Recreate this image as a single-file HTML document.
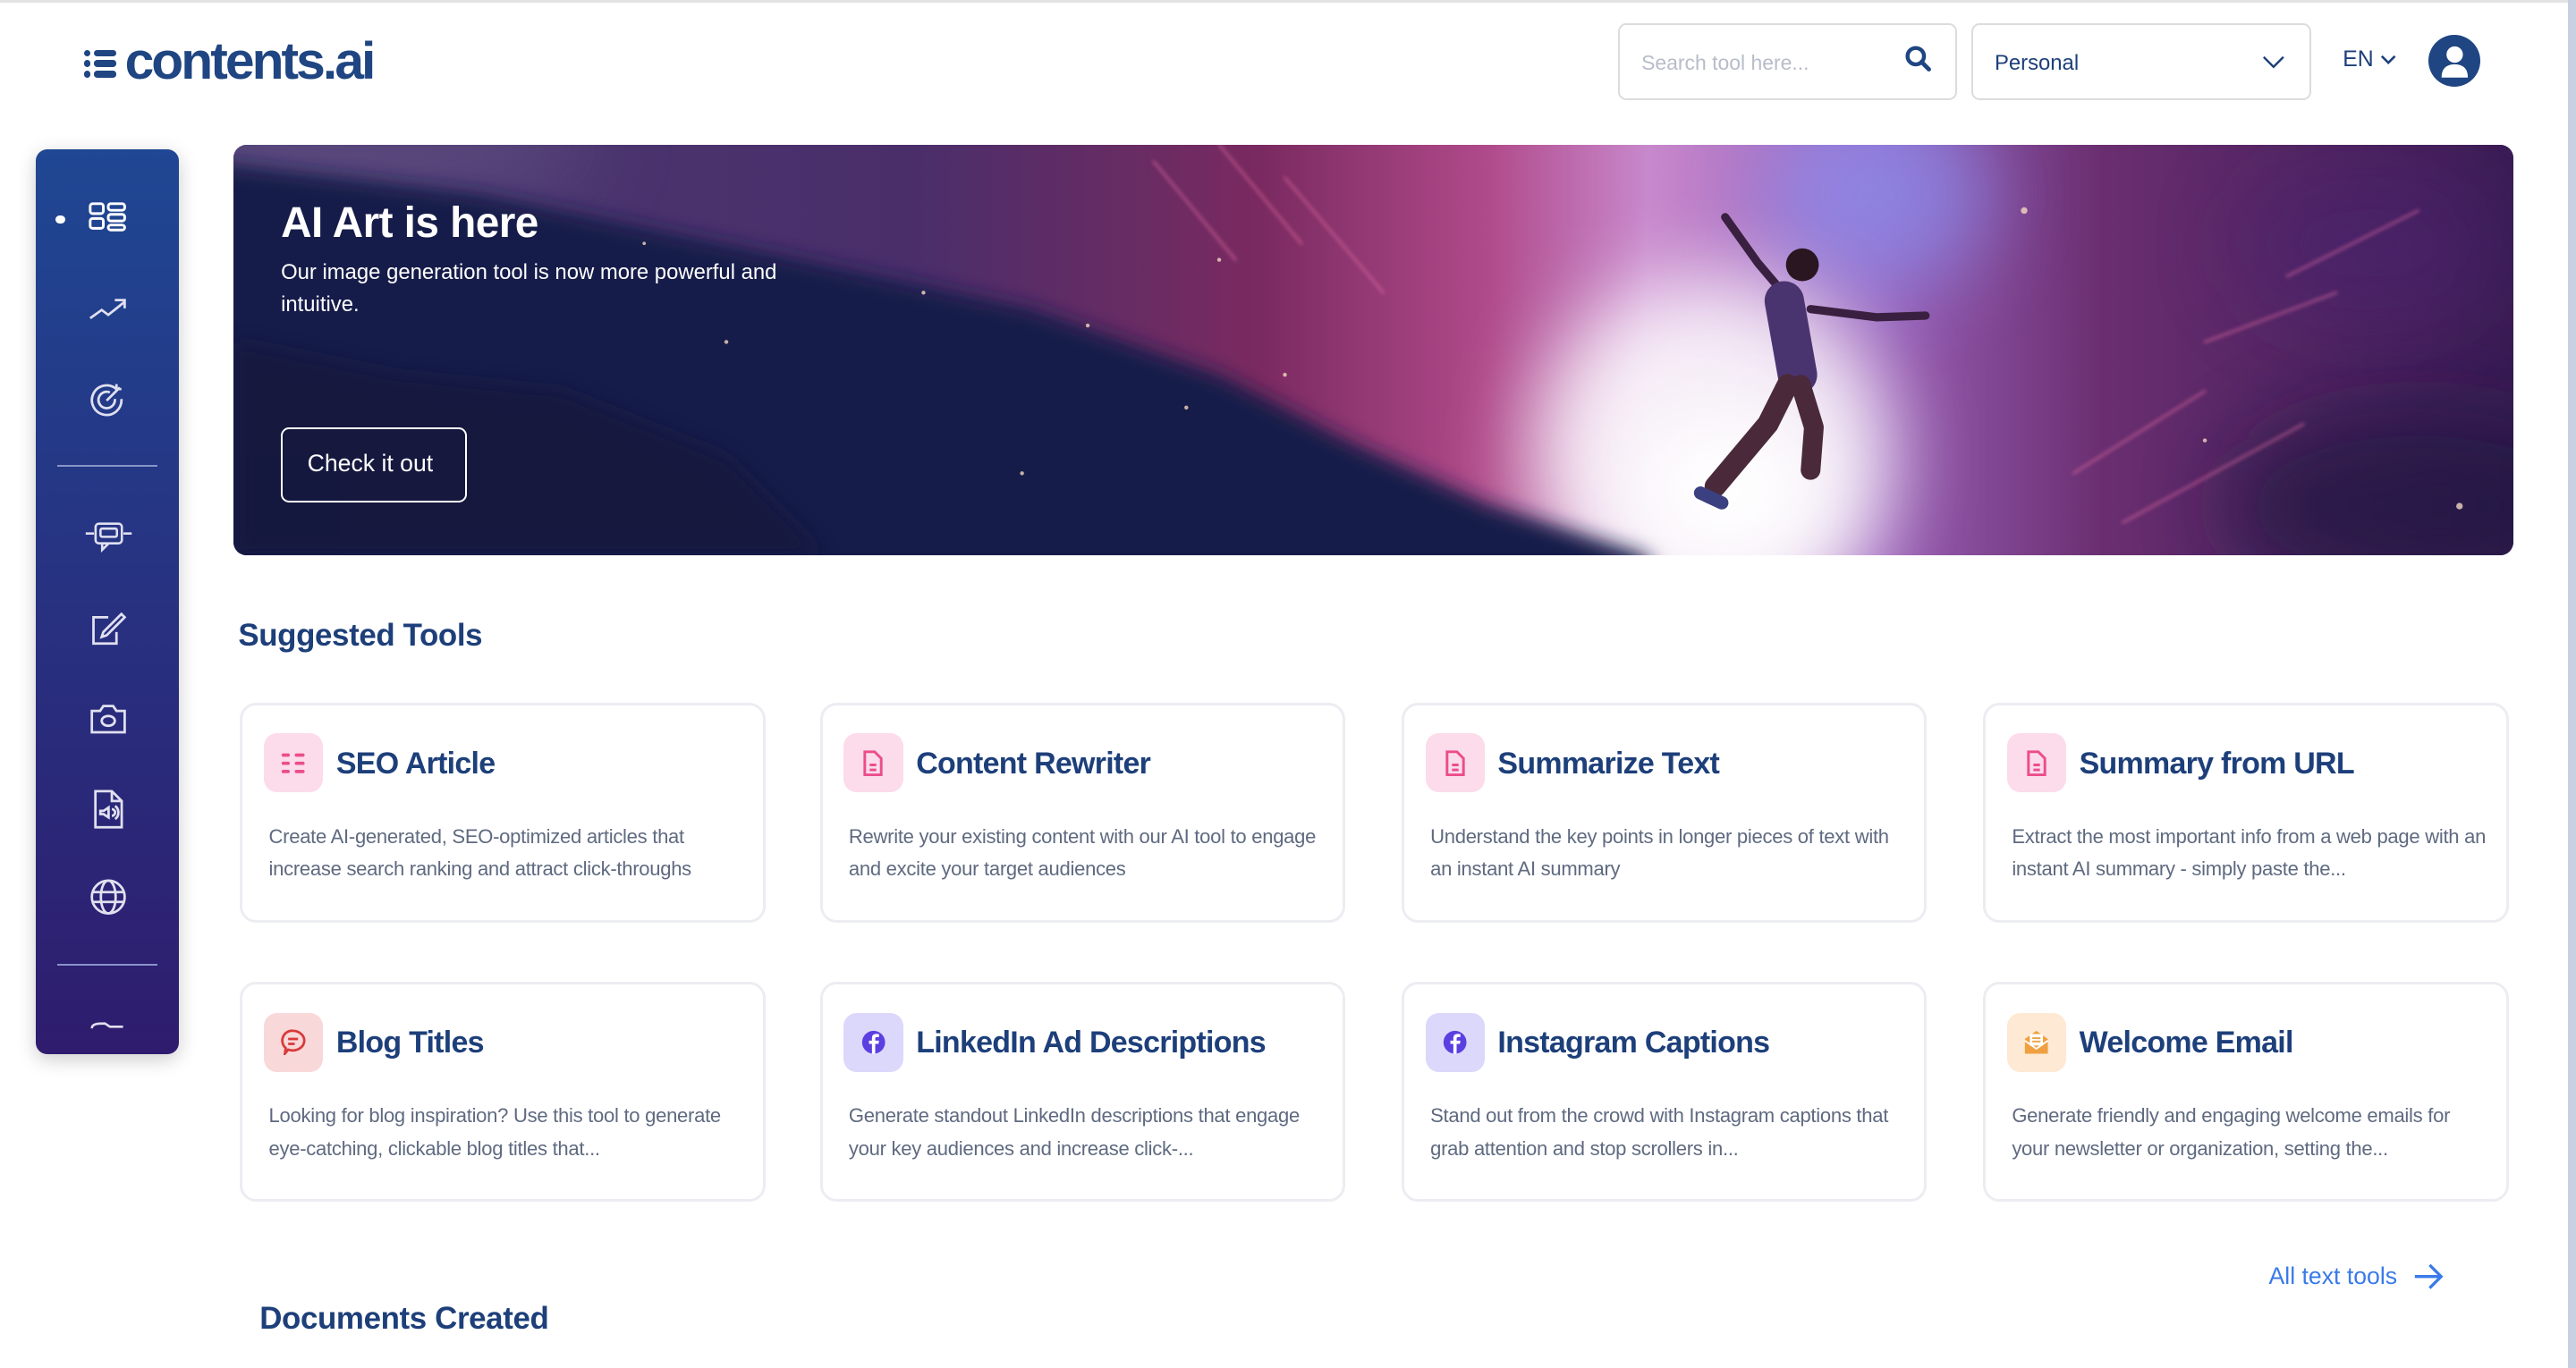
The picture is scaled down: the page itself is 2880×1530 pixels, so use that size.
<!DOCTYPE html>
<html><head><meta charset="utf-8">
<style>
*{box-sizing:border-box;margin:0;padding:0}
html,body{width:2880px;height:1530px;overflow:hidden;background:#fff}
#root{zoom:1.83674;width:1568px;height:833px;position:relative;font-family:"Liberation Sans",sans-serif;color:#1d3f7a}
.topline{position:absolute;left:0;top:0;width:1568px;height:1.5px;background:#e2e2e2}
.scroll{position:absolute;left:1563px;top:0;width:5px;height:833px;background:#c8d0e2}
.logo{position:absolute;left:51px;top:19px;font-weight:700;font-size:32px;letter-spacing:-1.6px;color:#1f4582;display:flex;align-items:center}
.logo .ic{display:flex;flex-direction:column;gap:2.5px;margin-right:5px;margin-top:3px}
.logo .ic i{display:flex;gap:2px}
.logo .ic i:before{content:"";width:4px;height:4px;border-radius:2px;background:#1f4582}
.logo .ic i:after{content:"";width:14px;height:4px;border-radius:2px;background:#1f4582}
.search{position:absolute;left:985px;top:14px;width:206px;height:47px;border:1.5px solid #dcdcdc;border-radius:5px;font-size:12.5px;color:#b8bcc8;padding:16px 0 0 13px}
.sel{position:absolute;left:1200px;top:14px;width:207px;height:47px;border:1.5px solid #dcdcdc;border-radius:5px;font-size:13px;color:#1d3f7a;padding:16px 0 0 13px}
.en{position:absolute;left:1426px;top:29px;font-size:13.5px;color:#1d3f7a}
.avatar{position:absolute;left:1478px;top:21px;width:32px;height:32px;border-radius:16px;background:#1f4582;overflow:hidden}
.side{position:absolute;left:22px;top:91px;width:87px;height:551px;border-radius:7px;background:linear-gradient(#1f4793,#2f1c6e);box-shadow:0 3px 12px rgba(0,0,0,.2);overflow:hidden}
.side svg{position:absolute}
.banner{position:absolute;left:142px;top:88px;width:1388px;height:250px;border-radius:8px;overflow:hidden;background:#3a2a60}
.banner h1{position:absolute;left:29px;top:33px;color:#fff;font-size:26px;font-weight:700;letter-spacing:-.3px}
.banner p{position:absolute;left:29px;top:68px;width:340px;color:#fff;font-size:13px;line-height:20px}
.btn{position:absolute;left:29px;top:172px;width:113px;height:46px;border:1.5px solid #fff;border-radius:5px;color:#fff;font-size:14.5px;padding:13px 0 0 15px}
h2{position:absolute;font-size:19px;font-weight:700;color:#1d3f7a;letter-spacing:-.2px}
.card{position:absolute;width:320px;height:134px;border:2px solid #ecedf2;border-radius:10px;background:#fff}
.card .i{position:absolute;left:13px;top:17px;width:36px;height:36px;border-radius:8px;display:flex;align-items:center;justify-content:center}
.card .t{position:absolute;left:57px;top:25px;font-size:18.5px;font-weight:700;color:#1d3f7a;letter-spacing:-.4px;white-space:nowrap}
.card .d{position:absolute;left:16px;top:70px;width:290px;font-size:12px;line-height:20px;color:#5f6a80;letter-spacing:-.15px}
.link{position:absolute;left:1381px;top:769px;font-size:14.5px;color:#3a7ae8}
</style></head><body><div id="root">
<div class="topline"></div><div class="scroll"></div>
<div class="logo"><div class="ic"><i></i><i></i><i></i></div>contents.ai</div>
<div class="search">Search tool here...
<svg style="position:absolute;left:173px;top:12px" width="18" height="18" viewBox="0 0 18 18"><circle cx="7" cy="7" r="5" fill="none" stroke="#1f4582" stroke-width="2.4"/><path d="M10.5 10.5 15 15" stroke="#1f4582" stroke-width="2.6" stroke-linecap="round"/></svg></div>
<div class="sel">Personal<svg style="position:absolute;left:176px;top:18px" width="14" height="9" viewBox="0 0 14 9"><path d="M1 1.5 7 7.5 13 1.5" fill="none" stroke="#1d3f7a" stroke-width="1.3"/></svg></div>
<div class="en">EN <svg width="10" height="7" viewBox="0 0 10 7"><path d="M1 1 5 5 9 1" fill="none" stroke="#1d3f7a" stroke-width="1.4"/></svg></div>
<div class="avatar"><svg width="32" height="32" viewBox="0 0 32 32"><circle cx="16" cy="12" r="5" fill="#fff"/><path d="M8 26c0-6 3.5-8 8-8s8 2 8 8z" fill="#fff"/></svg></div>

<div class="side">
<div style="position:absolute;left:12px;top:40px;width:6px;height:5px;border-radius:3px;background:#fff"></div>
<svg style="left:32px;top:32px" width="24" height="22" viewBox="0 0 24 22" fill="none" stroke="#fff" stroke-width="1.6"><rect x="1" y="1" width="8" height="6" rx="1.5"/><rect x="1" y="10" width="8" height="6" rx="1.5"/><rect x="12" y="1" width="10" height="4" rx="1.5"/><rect x="12" y="7.5" width="10" height="4" rx="1.5"/><rect x="12" y="14" width="10" height="3" rx="1.5"/></svg>
<svg style="left:32px;top:90px" width="24" height="16" viewBox="0 0 24 16" fill="none" stroke="#e0e0f0" stroke-width="1.5"><path d="M1 13 8 8 12 11 22 3M16 2h6v5"/></svg>
<svg style="left:32px;top:141px" width="24" height="22" viewBox="0 0 24 22" fill="none" stroke="#e0e0f0" stroke-width="1.5"><path d="M17 5A9 9 0 1 0 20 11"/><path d="M13 7A5 5 0 1 0 16 11"/><path d="M11 12 19 4M17 2v3h3"/></svg>
<div style="position:absolute;left:13px;top:192px;width:61px;height:1px;background:#8a94c8"></div>
<svg style="left:29px;top:226px" width="30" height="22" viewBox="0 0 30 22" fill="none" stroke="#e0e0f0" stroke-width="1.4"><rect x="7" y="2" width="16" height="12" rx="2"/><rect x="10" y="5" width="10" height="5" rx="1"/><path d="M11 14 11 18 15 14M1 8h5M24 8h5"/></svg>
<svg style="left:32px;top:281px" width="24" height="22" viewBox="0 0 24 22" fill="none" stroke="#e0e0f0" stroke-width="1.5"><path d="M12 4H3v16h14v-7"/><path d="M9 13 20 2l2 2-11 11-3 1z"/></svg>
<svg style="left:32px;top:337px" width="24" height="20" viewBox="0 0 24 20" fill="none" stroke="#e0e0f0" stroke-width="1.5"><path d="M2 5h5l2-3h6l2 3h5v13H2z"/><ellipse cx="12" cy="11" rx="4" ry="3"/></svg>
<svg style="left:34px;top:390px" width="20" height="24" viewBox="0 0 20 24" fill="none" stroke="#e0e0f0" stroke-width="1.5"><path d="M2 1h10l6 6v16H2zM12 1v6h6"/><path d="M5 13h2l3-2v6l-3-2H5zM12 12a2 2 0 0 1 0 4M14 10a5 5 0 0 1 0 8"/></svg>
<svg style="left:32px;top:444px" width="24" height="22" viewBox="0 0 24 22" fill="none" stroke="#e0e0f0" stroke-width="1.5"><ellipse cx="12" cy="11" rx="10" ry="10"/><ellipse cx="12" cy="11" rx="4.5" ry="10"/><path d="M2 8h20M2 14h20"/></svg>
<div style="position:absolute;left:13px;top:496px;width:61px;height:1px;background:#8a94c8"></div>
<svg style="left:32px;top:530px" width="24" height="6" viewBox="0 0 24 6" fill="none" stroke="#e0e0f0" stroke-width="1.4"><path d="M2 5c0-3 4-3 8-3l3 2h8"/></svg>
</div>

<div class="banner">
<svg style="position:absolute;left:0;top:0" width="1388" height="250" viewBox="0 0 1388 250" stroke-linecap="round" stroke-linejoin="round">
<defs>
<linearGradient id="bg" x1="0" y1="0" x2="1" y2="0">
<stop offset="0" stop-color="#4a3a72"/><stop offset=".3" stop-color="#4a2e6a"/><stop offset=".45" stop-color="#7a2a60"/><stop offset=".55" stop-color="#b04a8a"/><stop offset=".62" stop-color="#c888cc"/><stop offset=".72" stop-color="#9a60b8"/><stop offset=".82" stop-color="#6a2e70"/><stop offset="1" stop-color="#3a1c54"/>
</linearGradient>
<filter id="b1" x="-50%" y="-50%" width="200%" height="200%"><feGaussianBlur stdDeviation="25"/></filter>
<filter id="b2" x="-20%" y="-20%" width="140%" height="140%"><feGaussianBlur stdDeviation="6"/></filter>
<filter id="b3"><feGaussianBlur stdDeviation="1.2"/></filter>
</defs>
<rect width="1388" height="250" fill="url(#bg)"/>
<ellipse cx="1000" cy="30" rx="70" ry="60" fill="#8a90f0" opacity=".7" filter="url(#b1)"/>
<ellipse cx="900" cy="190" rx="110" ry="110" fill="#fff" opacity=".85" filter="url(#b1)"/>
<ellipse cx="910" cy="210" rx="60" ry="50" fill="#fff" filter="url(#b1)"/>
<ellipse cx="1330" cy="220" rx="120" ry="60" fill="#1e1440" opacity=".7" filter="url(#b1)"/>
<ellipse cx="1300" cy="60" rx="80" ry="50" fill="#4a2470" opacity=".5" filter="url(#b1)"/>
<ellipse cx="60" cy="0" rx="160" ry="40" fill="#6a5a8a" opacity=".5" filter="url(#b1)"/>
<polygon points="-20,10 150,30 340,69 486,100 600,140 680,181 762,218 860,250 870,270 -20,270" fill="#181a48" filter="url(#b2)"/>
<polygon points="0,120 100,140 200,150 300,190 360,250 0,250" fill="#121338" opacity=".6" filter="url(#b2)"/>
<g stroke="#e06aa0" stroke-width="1.5" fill="none" opacity=".6" filter="url(#b3)">
<path d="M560 10 L610 70"/><path d="M600 0 L650 60"/><path d="M640 20 L700 90"/><path d="M1120 200 L1200 150"/><path d="M1150 230 L1260 170"/><path d="M1250 80 L1330 40"/><path d="M1200 120 L1280 90"/>
</g>
<g fill="#f4d8c0" opacity=".8"><circle cx="300" cy="120" r="1.2"/><circle cx="420" cy="90" r="1.2"/><circle cx="520" cy="110" r="1.2"/><circle cx="580" cy="160" r="1.2"/><circle cx="640" cy="140" r="1.2"/><circle cx="1090" cy="40" r="2"/><circle cx="1200" cy="180" r="1.2"/><circle cx="1355" cy="220" r="2"/><circle cx="600" cy="70" r="1.2"/><circle cx="250" cy="60" r="1"/><circle cx="480" cy="200" r="1.2"/></g>
<g fill="none" stroke="#3a2040">
<path d="M908 44 L928 72 L945 92" stroke-width="5"/>
<path d="M960 100 L1000 105 L1030 104" stroke-width="5"/>
<path d="M944 95 L952 140" stroke="#4a3470" stroke-width="24"/>
<path d="M946 146 L934 170 L902 208" stroke="#4a2a3a" stroke-width="13"/>
<path d="M954 146 L962 172 L960 198" stroke="#4a2a3a" stroke-width="12"/>
</g>
<circle cx="955" cy="73" r="10" fill="#2a1620"/>
<path d="M893 212 L906 218" stroke="#3a4080" stroke-width="8"/>
</svg>
<h1>AI Art is here</h1>
<p>Our image generation tool is now more powerful and intuitive.</p>
<div class="btn">Check it out</div>
</div>

<h2 style="left:145px;top:376px">Suggested Tools</h2>

<div class="card" style="left:146px;top:428px"><div class="i" style="background:#fcdcea"><svg width="16" height="16" viewBox="0 0 16 16" fill="#ec4d8c"><rect x="1" y="2" width="5" height="2" rx="1"/><rect x="9" y="2" width="6" height="2" rx="1"/><rect x="1" y="7" width="5" height="2" rx="1"/><rect x="9" y="7" width="6" height="2" rx="1"/><rect x="1" y="12" width="5" height="2" rx="1"/><rect x="9" y="12" width="6" height="2" rx="1"/></svg></div><div class="t">SEO Article</div><div class="d">Create AI-generated, SEO-optimized articles that increase search ranking and attract click-throughs</div></div>
<div class="card" style="left:499px;top:428px"><div class="i" style="background:#fcdcea"><svg width="12" height="16" viewBox="0 0 12 16" fill="none" stroke="#ec4d8c" stroke-width="1.6"><path d="M1 1h6l4 4v10H1zM4 9h4M4 12h4"/></svg></div><div class="t">Content Rewriter</div><div class="d">Rewrite your existing content with our AI tool to engage and excite your target audiences</div></div>
<div class="card" style="left:853px;top:428px"><div class="i" style="background:#fcdcea"><svg width="12" height="16" viewBox="0 0 12 16" fill="none" stroke="#ec4d8c" stroke-width="1.6"><path d="M1 1h6l4 4v10H1zM4 9h4M4 12h4"/></svg></div><div class="t">Summarize Text</div><div class="d">Understand the key points in longer pieces of text with an instant AI summary</div></div>
<div class="card" style="left:1207px;top:428px"><div class="i" style="background:#fcdcea"><svg width="12" height="16" viewBox="0 0 12 16" fill="none" stroke="#ec4d8c" stroke-width="1.6"><path d="M1 1h6l4 4v10H1zM4 9h4M4 12h4"/></svg></div><div class="t">Summary from URL</div><div class="d">Extract the most important info from a web page with an instant AI summary - simply paste the...</div></div>

<div class="card" style="left:146px;top:598px"><div class="i" style="background:#f9d8da"><svg width="16" height="16" viewBox="0 0 16 16" fill="none" stroke="#d83a3a" stroke-width="1.5"><path d="M8 1a7 6 0 1 1-3 11.5L3 15l.5-3.5A6 6 0 0 1 8 1zM5 6h6M5 9h4"/></svg></div><div class="t">Blog Titles</div><div class="d">Looking for blog inspiration? Use this tool to generate eye-catching, clickable blog titles that...</div></div>
<div class="card" style="left:499px;top:598px"><div class="i" style="background:#dcd8fb"><svg width="16" height="16" viewBox="0 0 16 16"><circle cx="8" cy="8" r="7" fill="#5b3fe0"/><path d="M9 15V9h2l.3-2H9V5.8c0-.6.2-1 1-1h1.3V3c-.3 0-1-.1-1.8-.1C7.8 2.9 7 3.9 7 5.6V7H5.2v2H7v6z" fill="#fff"/></svg></div><div class="t">LinkedIn Ad Descriptions</div><div class="d">Generate standout LinkedIn descriptions that engage your key audiences and increase click-...</div></div>
<div class="card" style="left:853px;top:598px"><div class="i" style="background:#dcd8fb"><svg width="16" height="16" viewBox="0 0 16 16"><circle cx="8" cy="8" r="7" fill="#5b3fe0"/><path d="M9 15V9h2l.3-2H9V5.8c0-.6.2-1 1-1h1.3V3c-.3 0-1-.1-1.8-.1C7.8 2.9 7 3.9 7 5.6V7H5.2v2H7v6z" fill="#fff"/></svg></div><div class="t">Instagram Captions</div><div class="d">Stand out from the crowd with Instagram captions that grab attention and stop scrollers in...</div></div>
<div class="card" style="left:1207px;top:598px"><div class="i" style="background:#fde9d4"><svg width="16" height="16" viewBox="0 0 16 16"><path d="M1 6l7-5 7 5v9H1z" fill="#f0a040"/><rect x="4" y="3" width="8" height="7" fill="#fff"/><path d="M5.5 5.5h5M5.5 7.5h5" stroke="#f0a040"/><path d="M1 7l7 5 7-5" fill="none" stroke="#fff" stroke-width="1"/></svg></div><div class="t">Welcome Email</div><div class="d">Generate friendly and engaging welcome emails for your newsletter or organization, setting the...</div></div>

<div class="link">All text tools <svg style="vertical-align:-3px;margin-left:6px" width="19" height="16" viewBox="0 0 19 16" fill="none" stroke="#3a7ae8" stroke-width="1.8"><path d="M1 8h16M10 1l7 7-7 7"/></svg></div>
<h2 style="left:158px;top:792px">Documents Created</h2>
</div></body></html>
